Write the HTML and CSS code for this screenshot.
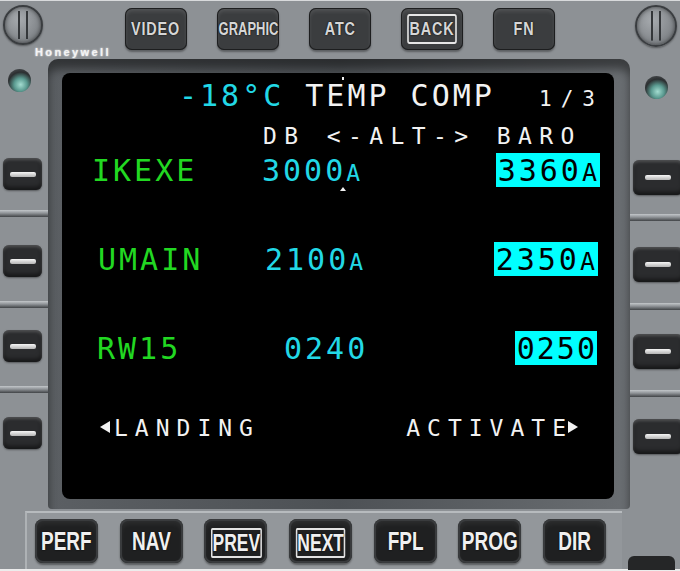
FILE: index.html
```html
<!DOCTYPE html>
<html lang="en">

<head>
    <meta charset="UTF-8">
    <meta name="viewport" content="width=device-width, initial-scale=1.0">
    <title>Temp Comp</title>
    <link rel="stylesheet" href="styles.css">
</head>

<body>

    <div class="panel">

        <div class="top">
            <div class="brand">
                <div class="knob"></div>
                <div class="logo">Honeywell</div>
            </div>
            <div class="top_keys">
                <div class="key"><span>VIDEO</span></div>
                <div class="key key_tight"><span>GRAPHIC</span></div>
                <div class="key"><span>ATC</span></div>
                <div class="key"><span class="frame">BACK</span></div>
                <div class="key"><span>FN</span></div>
            </div>
            <div class="knob knob_right"></div>
        </div>

        <div class="side side_left">
            <div class="screw"></div>
            <div class="lsk l1"></div>
            <div class="ledge g1"></div>
            <div class="lsk l2"></div>
            <div class="ledge g2"></div>
            <div class="lsk l3"></div>
            <div class="ledge g3"></div>
            <div class="lsk l4"></div>
        </div>

        <div class="bezel">
            <div class="screen">
                <span class="marker marker_top"></span>
                <span class="marker marker_cursor"></span>

                <div class="row_title">
                    <span class="cyan">-18°C</span>
                    <span class="white title_name">TEMP COMP</span>
                    <span class="white page">1/3</span>
                </div>

                <div class="row_head white">DB <-ALT-> BARO</div>

                <div class="data r1">
                    <span class="lbl green">IKEXE</span>
                    <span class="db cyan">3000<small>A</small></span>
                    <span class="box">3360<small>A</small></span>
                </div>

                <div class="data r2">
                    <span class="lbl green">UMAIN</span>
                    <span class="db cyan">2100<small>A</small></span>
                    <span class="box">2350<small>A</small></span>
                </div>

                <div class="data r3">
                    <span class="lbl green">RW15</span>
                    <span class="db cyan">0240</span>
                    <span class="box box_short">0250</span>
                </div>

                <div class="row_lsk white">
                    <span class="lsk_left"><svg class="arrow arrow_left" viewBox="0 0 12 14"><polygon points="1,7 11,1 11,13" /></svg>LANDING</span>
                    <span class="lsk_right">ACTIVATE<svg class="arrow arrow_right" viewBox="0 0 12 14"><polygon points="11,7 1,1 1,13" /></svg></span>
                </div>
            </div>
        </div>

        <div class="side side_right">
            <div class="screw"></div>
            <div class="lsk l1"></div>
            <div class="ledge g1"></div>
            <div class="lsk l2"></div>
            <div class="ledge g2"></div>
            <div class="lsk l3"></div>
            <div class="ledge g3"></div>
            <div class="lsk l4"></div>
        </div>

        <div class="bottom">
            <div class="bottom_keys">
                <div class="bkey"><span>PERF</span></div>
                <div class="bkey"><span>NAV</span></div>
                <div class="bkey"><span class="frame">PREV</span></div>
                <div class="bkey"><span class="frame">NEXT</span></div>
                <div class="bkey"><span>FPL</span></div>
                <div class="bkey"><span>PROG</span></div>
                <div class="bkey"><span>DIR</span></div>
            </div>
            <div class="stub"></div>
        </div>

    </div>

</body>

</html>
```

FILE: styles.css
```css
*{
    box-sizing:border-box;
}

body{
    margin:0;
    background:#8d9195;
    overflow:hidden;
}

.panel{
    display:grid;
    grid-template-columns:48px 582px 50px;
    grid-template-rows:58px 450px 63px;
    width:680px;
    height:571px;
    overflow:hidden;
    border-top:1px solid #d8dadc;
}

/* top row */
.top{
    grid-column:1 / -1;
    display:flex;
}

.brand{
    width:125px;
    padding:4px 0 0 3px;
}

.knob{
    width:40px;
    height:40px;
    border-radius:50%;
    border:2px solid #3a3d40;
    background:
        linear-gradient(90deg, transparent 36%, #34373a 36%, #34373a 43%, transparent 43%, transparent 57%, #34373a 57%, #34373a 64%, transparent 64%),
        radial-gradient(circle at 40% 35%, #a6aaae, #6f7377);
    background-size:100% 78%, 100% 100%;
    background-position:center, center;
    background-repeat:no-repeat;
    box-shadow:inset 0 0 4px rgba(0,0,0,.5), 0 1px 2px rgba(0,0,0,.4);
}

.knob_right{
    width:42px;
    height:42px;
    margin:4px 3px 0 auto;
}

.logo{
    margin:2px 0 0 32px;
    font:bold 11px/10px "Liberation Sans", sans-serif;
    letter-spacing:2.4px;
    color:#f4f4f4;
    text-shadow:0 0 2px #fff;
}

.top_keys{
    display:flex;
    gap:30px;
    margin-top:7px;
}

.key{
    display:flex;
    align-items:center;
    justify-content:center;
    width:62px;
    height:42px;
    border-radius:7px;
    background:#3b3d3f;
    box-shadow:inset 0 0 0 1px #1d1e1f, inset 0 3px 4px rgba(255,255,255,.13), 0 2px 2px rgba(0,0,0,.35);
}

.key span{
    display:inline-block;
    font:bold 18px/1 "Liberation Sans", sans-serif;
    letter-spacing:1px;
    color:#d6d6d6;
    text-shadow:0 0 2px #000;
    transform:scaleX(.8);
}

.key_tight span{
    letter-spacing:0;
    transform:scaleX(.72);
}

.key .frame{
    display:flex;
    align-items:center;
    justify-content:center;
    width:71px;
    height:30px;
    border:2px solid #e6e6e6;
    border-radius:3px;
}

/* side columns */
.side{
    display:flex;
    flex-direction:column;
}

.side_left{
    padding-top:10px;
}

.side_right{
    padding-top:17px;
}

.screw{
    width:23px;
    height:23px;
    margin-left:8px;
    border-radius:50%;
    background:radial-gradient(circle at 55% 68%, #a3dcd0 0, #5a9a90 32%, #2c2f31 62%, #5d6164 100%);
}

.side_right .screw{
    margin-left:15px;
}

.lsk{
    display:flex;
    align-items:center;
    justify-content:center;
    width:39px;
    height:32px;
    margin-left:3px;
    border-radius:6px;
    background:#2b2c2e;
    box-shadow:inset 0 2px 3px rgba(255,255,255,.18), inset 0 -3px 4px rgba(0,0,0,.5), 0 1px 2px rgba(0,0,0,.4);
}

.lsk::before{
    content:"";
    width:26px;
    height:5px;
    border-radius:2px;
    background:linear-gradient(#f6f6f6, #b4b4b4);
}

.ledge{
    height:7px;
    background:linear-gradient(#c3c7ca, #8f9397 45%, #404346);
}

.side_left .l1{ margin-top:66px; }
.side_left .g1{ margin-top:20px; }
.side_left .l2{ margin-top:28px; }
.side_left .g2{ margin-top:24px; }
.side_left .l3{ margin-top:22px; }
.side_left .g3{ margin-top:24px; }
.side_left .l4{ margin-top:24px; }

.side_right .lsk{
    width:50px;
    height:35px;
    justify-content:flex-start;
    padding-left:12px;
}

.side_right .l1{ margin-top:61px; }
.side_right .g1{ margin-top:19px; }
.side_right .l2{ margin-top:26px; }
.side_right .g2{ margin-top:21px; }
.side_right .l3{ margin-top:24px; }
.side_right .g3{ margin-top:21px; }
.side_right .l4{ margin-top:22px; }

/* screen */
.bezel{
    padding:14px 16px 10px 14px;
    border-radius:10px 10px 4px 4px;
    background:linear-gradient(90deg, #5b5f63, #4d5155 50%, #6a6e72);
    box-shadow:inset 0 10px 10px rgba(0,0,0,.45);
}

.screen{
    position:relative;
    display:flex;
    flex-direction:column;
    height:426px;
    padding-top:5px;
    border-radius:8px;
    background:#000;
    font-family:"DejaVu Sans Mono", monospace;
    white-space:pre;
}

.cyan{ color:#22d8e6; }
.green{ color:#22d822; }
.white{ color:#f2f2f2; }

.row_title{
    display:flex;
    align-items:baseline;
    height:36px;
    font-size:30px;
    line-height:36px;
    letter-spacing:3px;
    padding-left:117px;
}

.title_name{
    margin-left:21px;
}

.page{
    margin:0 10px 0 auto;
    font-size:21px;
    letter-spacing:9px;
}

.row_head{
    height:28px;
    margin-top:8px;
    padding-left:201px;
    font-size:23px;
    line-height:28px;
    letter-spacing:7.4px;
}

.data{
    display:grid;
    grid-template-columns:200px 1fr auto;
    align-items:start;
    height:36px;
    font-size:30px;
    line-height:36px;
    letter-spacing:3px;
}

.data small{
    font-size:23px;
    line-height:1;
    letter-spacing:0;
}

.r1{ margin-top:3px; }
.r2{ margin-top:53px; }
.r3{ margin-top:53px; }

.r1 .lbl{ padding-left:30px; }
.r2 .lbl{ padding-left:36px; }
.r3 .lbl{ padding-left:35px; }

.r2 .db{ padding-left:3px; }
.r3 .db{ padding-left:22px; }

.box{
    height:34px;
    padding:0 3px 0 2px;
    background:#0ff;
    color:#000;
}

.box small{
    font-size:25px;
}

.r1 .box{ margin-right:14px; }
.r2 .box{ margin-right:16px; }
.r3 .box{ margin-right:17px; letter-spacing:2px; padding:0 0 0 2px; }

.row_lsk{
    display:flex;
    height:28px;
    margin-top:47px;
    font-size:23px;
    line-height:28px;
    letter-spacing:7px;
}

.lsk_left{
    margin-left:37px;
}

.lsk_right{
    margin:0 35px 0 auto;
}

.arrow{
    width:12px;
    height:14px;
    vertical-align:2px;
    fill:#f2f2f2;
}

.arrow_left{
    margin-right:3px;
}

.arrow_right{
    margin-left:-6px;
}

.marker{
    position:absolute;
    background:#f2f2f2;
}

.marker_top{
    left:280px;
    top:4px;
    width:2px;
    height:3px;
}

.marker_cursor{
    left:278px;
    top:114px;
    width:6px;
    height:4px;
    clip-path:polygon(50% 0, 100% 100%, 0 100%);
}

/* bottom row */
.bottom{
    grid-column:1 / -1;
    display:flex;
    border-bottom:3px solid #ececec;
}

.bottom_keys{
    display:flex;
    gap:21.7px;
    width:597px;
    height:58px;
    margin:2px 0 0 25px;
    padding:6px 0 0 8px;
    border-top:2px solid #b7bbbe;
    border-left:2px solid #aeb2b5;
    background:#93979b;
}

.bkey{
    display:flex;
    align-items:center;
    justify-content:center;
    width:63px;
    height:44px;
    border-radius:8px;
    background:#1f2021;
    box-shadow:inset 0 0 0 2px #393b3d, inset 0 4px 6px rgba(255,255,255,.08), 0 2px 2px rgba(0,0,0,.4);
}

.bkey span{
    display:inline-block;
    font:bold 25px/1 "Liberation Sans", sans-serif;
    color:#f0f0f0;
    text-shadow:0 0 2px #000;
    transform:scaleX(.76);
}

.bkey .frame{
    display:flex;
    align-items:center;
    justify-content:center;
    width:74px;
    height:30px;
    margin-top:4px;
    font-size:23px;
    border:2px solid #e2e2e2;
    border-radius:2px;
}

.stub{
    width:47px;
    height:14px;
    margin:47px 5px 0 auto;
    border-radius:6px 6px 0 0;
    background:#252627;
}
```
